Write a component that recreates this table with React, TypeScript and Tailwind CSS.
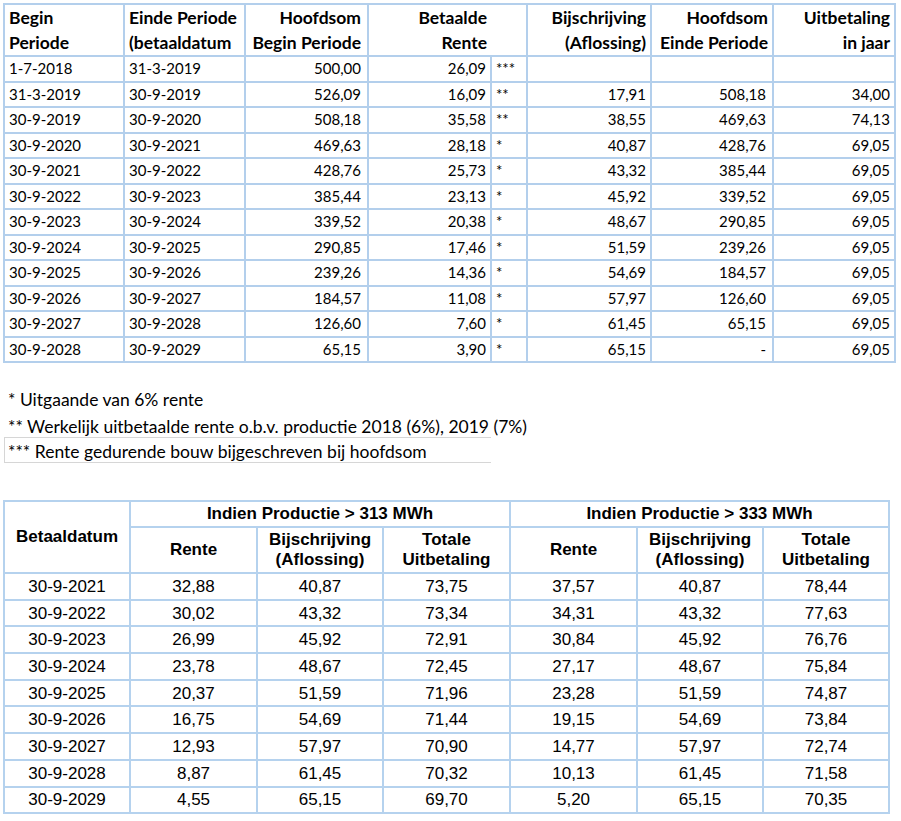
import React from "react";

// Aflossingsschema obligaties
const schema = [
  ["1-7-2018", "31-3-2019", "500,00", "26,09", "***", "", "", ""],
  ["31-3-2019", "30-9-2019", "526,09", "16,09", "**", "17,91", "508,18", "34,00"],
  ["30-9-2019", "30-9-2020", "508,18", "35,58", "**", "38,55", "469,63", "74,13"],
  ["30-9-2020", "30-9-2021", "469,63", "28,18", "*", "40,87", "428,76", "69,05"],
  ["30-9-2021", "30-9-2022", "428,76", "25,73", "*", "43,32", "385,44", "69,05"],
  ["30-9-2022", "30-9-2023", "385,44", "23,13", "*", "45,92", "339,52", "69,05"],
  ["30-9-2023", "30-9-2024", "339,52", "20,38", "*", "48,67", "290,85", "69,05"],
  ["30-9-2024", "30-9-2025", "290,85", "17,46", "*", "51,59", "239,26", "69,05"],
  ["30-9-2025", "30-9-2026", "239,26", "14,36", "*", "54,69", "184,57", "69,05"],
  ["30-9-2026", "30-9-2027", "184,57", "11,08", "*", "57,97", "126,60", "69,05"],
  ["30-9-2027", "30-9-2028", "126,60", "7,60", "*", "61,45", "65,15", "69,05"],
  ["30-9-2028", "30-9-2029", "65,15", "3,90", "*", "65,15", "-", "69,05"],
];

const scenario = [
  ["30-9-2021", "32,88", "40,87", "73,75", "37,57", "40,87", "78,44"],
  ["30-9-2022", "30,02", "43,32", "73,34", "34,31", "43,32", "77,63"],
  ["30-9-2023", "26,99", "45,92", "72,91", "30,84", "45,92", "76,76"],
  ["30-9-2024", "23,78", "48,67", "72,45", "27,17", "48,67", "75,84"],
  ["30-9-2025", "20,37", "51,59", "71,96", "23,28", "51,59", "74,87"],
  ["30-9-2026", "16,75", "54,69", "71,44", "19,15", "54,69", "73,84"],
  ["30-9-2027", "12,93", "57,97", "70,90", "14,77", "57,97", "72,74"],
  ["30-9-2028", "8,87", "61,45", "70,32", "10,13", "61,45", "71,58"],
  ["30-9-2029", "4,55", "65,15", "69,70", "5,20", "65,15", "70,35"],
];

const topCols = [120, 121, 123, 123, 36, 124, 122, 122];
const bottomCols = [126, 127, 126, 127, 127, 126, 126];

const td = "border-2 border-[#b3cfec] px-[4px] leading-none";
const th = "border-2 border-[#b3cfec] px-[4px] text-[17.5px] leading-[25px] align-middle whitespace-nowrap overflow-hidden";
const btd = "border-2 border-[#b5d2ee] text-center leading-none";
const bth = "border-2 border-[#b5d2ee] text-center leading-[20px] align-middle";

export default function App() {
  return (
    <div className="min-h-screen bg-white pl-[3px] pt-[3px] text-black">
      {/* bovenste tabel */}
      <table
        className="table-fixed border-collapse text-[15px]"
        style={{ fontFamily: "Lato, 'Liberation Sans', sans-serif" }}
      >
        <colgroup>
          {topCols.map((w, i) => (
            <col key={i} style={{ width: w }} />
          ))}
        </colgroup>
        <thead>
          <tr className="h-[52px] font-bold">
            <th className={`${th} text-left`}>Begin<br />Periode</th>
            <th className={`${th} text-left`}>Einde Periode<br />(betaaldatum</th>
            <th className={`${th} text-right pr-[6px]`}>Hoofdsom<br />Begin Periode</th>
            <th className={`${th} text-right border-r-0`}>Betaalde<br />Rente</th>
            <th className={`${th} border-l-0`} />
            <th className={`${th} text-right`}>Bijschrijving<br />(Aflossing)</th>
            <th className={`${th} text-right`}>Hoofdsom<br />Einde Periode</th>
            <th className={`${th} text-right`}>Uitbetaling<br />in jaar</th>
          </tr>
        </thead>
        <tbody>
          {schema.map((r) => (
            <tr key={r[0]} className="h-[25.5px]">
              <td className={`${td} text-left`}>{r[0]}</td>
              <td className={`${td} text-left`}>{r[1]}</td>
              <td className={`${td} text-right pr-[6px]`}>{r[2]}</td>
              <td className={`${td} text-right`}>{r[3]}</td>
              <td className={`${td} text-left`}>{r[4]}</td>
              <td className={`${td} text-right`}>{r[5]}</td>
              <td className={`${td} text-right pr-[6px]`}>{r[6]}</td>
              <td className={`${td} text-right`}>{r[7]}</td>
            </tr>
          ))}
        </tbody>
      </table>

      {/* voetnoten */}
      <div
        className="mt-[24px] text-[17.5px]"
        style={{ fontFamily: "Lato, 'Liberation Sans', sans-serif" }}
      >
        <div className="flex h-[26px] items-center pl-[5px]">* Uitgaande van 6% rente</div>
        <div className="flex h-[24px] items-center pl-[5px] pt-[4px]">
          ** Werkelijk uitbetaalde rente o.b.v. productie 2018 (6%), 2019 (7%)
        </div>
        <div className="ml-[1px] flex h-[26px] w-[487px] items-center border border-r-0 border-[#d6d6d6] pl-[3px] pt-[4px]">
          *** Rente gedurende bouw bijgeschreven bij hoofdsom
        </div>
      </div>

      {/* scenario tabel */}
      <table
        className="mt-[37px] table-fixed border-collapse text-[17px]"
        style={{ fontFamily: "'Liberation Sans', Arial, sans-serif" }}
      >
        <colgroup>
          {bottomCols.map((w, i) => (
            <col key={i} style={{ width: w }} />
          ))}
        </colgroup>
        <thead className="font-bold">
          <tr className="h-[26px]">
            <th rowSpan={2} className={bth}>Betaaldatum</th>
            <th colSpan={3} className={bth}>Indien Productie &gt; 313 MWh</th>
            <th colSpan={3} className={bth}>Indien Productie &gt; 333 MWh</th>
          </tr>
          <tr className="h-[46px]">
            <th className={bth}>Rente</th>
            <th className={bth}>Bijschrijving<br />(Aflossing)</th>
            <th className={bth}>Totale<br />Uitbetaling</th>
            <th className={bth}>Rente</th>
            <th className={bth}>Bijschrijving<br />(Aflossing)</th>
            <th className={bth}>Totale<br />Uitbetaling</th>
          </tr>
        </thead>
        <tbody>
          {scenario.map((r) => (
            <tr key={r[0]} className="h-[26.7px]">
              {r.map((c, i) => (
                <td key={i} className={btd}>{c}</td>
              ))}
            </tr>
          ))}
        </tbody>
      </table>
    </div>
  );
}
